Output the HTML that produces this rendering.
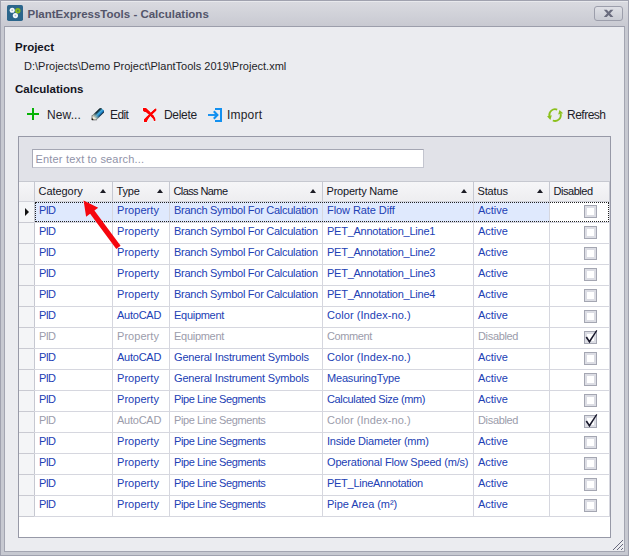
<!DOCTYPE html><html><head><meta charset="utf-8"><title>PlantExpressTools - Calculations</title><style>
*{box-sizing:border-box;margin:0;padding:0}
html,body{width:629px;height:556px;overflow:hidden;background:#c7c9d1;}
body{font-family:"Liberation Sans",sans-serif;font-size:11px;color:#1e1e28;position:relative;}
.abs{position:absolute}
#frame{position:absolute;left:0;top:0;width:629px;height:556px;background:#c7c9d1;border:1px solid #a0a2af;}
#title{position:absolute;left:1px;top:1px;width:627px;height:26px;background:linear-gradient(#d9dae0,#c8c9d1);border-top:1px solid #e8e9ed;}
#ttext{position:absolute;left:27.5px;top:7px;font-weight:bold;font-size:11.5px;line-height:15px;color:#53556a;white-space:pre}
#close{position:absolute;left:594px;top:6px;width:29px;height:15px;border:1px solid #9c9eab;border-radius:3px;background:linear-gradient(#dfe0e6,#c9cbd3);}
#content{position:absolute;left:4px;top:26px;width:621px;height:526px;background:#ebecf0;border:1px solid #a3a5b1;border-top-color:#9c9eab;}
.lbl{position:absolute;font-weight:bold;font-size:11.5px;line-height:14px;color:#14141e;white-space:pre}
.txt{position:absolute;font-size:11px;line-height:14px;white-space:pre;color:#1e1e28}
.tb{position:absolute;top:108px;font-size:12px;line-height:14px;white-space:pre;color:#1e1e28;letter-spacing:-0.1px}
#grid{position:absolute;left:18px;top:136px;width:593px;height:402px;background:#fff;border:1px solid #9799a7;}
#find{position:absolute;left:19px;top:137px;width:591px;height:44px;background:#e1e2e8;}
#search{position:absolute;left:32px;top:149px;width:392px;height:19px;background:#fff;border:1px solid #c3c5cf;border-top-color:#a4a6b3;border-left-color:#a9abb8;}
#search span{position:absolute;left:2.5px;top:2px;line-height:14px;color:#9092a8;font-size:11px;letter-spacing:0.18px;white-space:pre}
#hdr{position:absolute;left:19px;top:181px;width:591px;height:21px;background:linear-gradient(#f6f6f8,#ededf0);border-top:1px solid #c6c8d0;border-bottom:1px solid #d2d3da;border-right:1px solid #c6c8d1;}
.hc{position:absolute;top:182px;height:19px;border-left:1px solid #c6c8d1;font-size:11px;line-height:19px;padding-left:3.5px;white-space:pre;color:#14141e}
.tri{position:absolute;top:6.7px;width:0;height:0;border-left:3.7px solid transparent;border-right:3.7px solid transparent;border-bottom:4.3px solid #1c1c24;}
.row{position:absolute;left:19px;width:591px;height:21px;border-bottom:1px solid #d6d7df;border-right:1px solid #d6d7df;}
.ind{position:absolute;left:0;top:0;width:15px;height:21px;background:#f4f5f7;border-bottom:1px solid #c9cad2;}
.c.f{border-left-color:#c6c8d1}
.c{position:absolute;top:0;height:20px;border-left:1px solid #d6d7df;font-size:11px;line-height:17px;padding-left:4px;white-space:pre;color:#2140b4;overflow:hidden}
.dis .c{color:#9b9cab}
.cb{position:absolute;left:565px;top:3px;width:13px;height:13px;border:1px solid #a4a6b2;background:#fff;box-shadow:inset 0 0 0 2px #dcdde4;}
.sel .c{background:#dfe9fd}
.sel .c.k{background:#fff}
</style></head><body>
<div id="frame"></div>
<div id="title"></div>
<svg class="abs" style="left:7px;top:5px" width="16" height="16" viewBox="0 0 16 16"><rect x="0" y="0" width="16" height="16" rx="1.7" fill="#2b668c"/><circle cx="5.2" cy="5.2" r="2.55" fill="#f4f8fa"/><circle cx="5.2" cy="5.2" r="0.9" fill="#a9c0cf"/><circle cx="10.8" cy="5.7" r="1.8" fill="none" stroke="#86b81e" stroke-width="1.8"/><rect x="10.2" y="5.1" width="1.2" height="1.2" fill="#5a9a3a"/><circle cx="8.4" cy="10.6" r="2.6" fill="#f4f8fa"/><circle cx="8.4" cy="10.6" r="0.9" fill="#a9c0cf"/></svg>
<div id="ttext">PlantExpressTools - Calculations</div>
<div id="close"><svg class="abs" style="left:8px;top:1px" width="12" height="10" viewBox="0 0 12 10"><path d="M0.8 1.8 L3.8 1.8 L10.4 9 L7.4 9 Z M7.4 1.8 L10.4 1.8 L3.8 9 L0.8 9 Z" fill="#6a6c7e"/></svg></div>
<div id="content"></div>
<div class="lbl" style="left:15px;top:40px">Project</div>
<div class="txt" style="left:24px;top:59px">D:\Projects\Demo Project\PlantTools 2019\Project.xml</div>
<div class="lbl" style="left:15px;top:82px">Calculations</div>
<svg class="abs" style="left:26px;top:107px" width="14" height="14" viewBox="0 0 14 14"><path d="M7 1 V13 M1 7 H13" stroke="#06b206" stroke-width="2" fill="none"/></svg>
<div class="tb" style="left:47px;letter-spacing:0.1px">New...</div>
<svg class="abs" style="left:90px;top:106px" width="16" height="16" viewBox="90 106 16 16"><defs><linearGradient id="pg" gradientUnits="userSpaceOnUse" x1="95.6" y1="111.4" x2="100.6" y2="116.4"><stop offset="0" stop-color="#0b0f14"/><stop offset="0.24" stop-color="#143642"/><stop offset="0.5" stop-color="#45abdd"/><stop offset="0.72" stop-color="#1b7cc0"/><stop offset="0.9" stop-color="#0f2a40"/><stop offset="1" stop-color="#0a0d12"/></linearGradient><linearGradient id="pt" gradientUnits="userSpaceOnUse" x1="93.0" y1="119.0" x2="98.0" y2="114.0"><stop offset="0" stop-color="#f1ead6"/><stop offset="0.45" stop-color="#b9c2b0" stop-opacity="0.85"/><stop offset="1" stop-color="#5a8a98" stop-opacity="0"/></linearGradient></defs><path d="M92.2 115.4 L99.6 108.3 L101.2 108.0 L104.0 110.6 L104.0 112.4 L96.8 119.6 Z" fill="url(#pg)"/><path d="M92.3 115.6 L96.0 112.0 L100.4 116.4 L96.8 119.6 Z" fill="url(#pt)"/><path d="M92.3 115.4 L96.8 119.6 L92.0 119.9 Z" fill="#f1ead6"/><path d="M92.1 115.3 L91.9 120.0 L97.0 119.8" stroke="#1a1a1a" stroke-width="0.7" fill="none" stroke-opacity="0.75"/><path d="M91.9 117.7 L93.7 120.0 L91.8 120.1 Z" fill="#19140c"/></svg>
<div class="tb" style="left:110px;letter-spacing:-0.6px">Edit</div>
<svg class="abs" style="left:141px;top:106px" width="17" height="17" viewBox="141 106 17 17"><g fill="#ff0000" stroke="#eef8f9" stroke-width="1.4" stroke-linejoin="round" paint-order="stroke"><path d="M143.0 108.0 L145.8 108.0 L150.6 112.6 L153.6 115.8 L155.2 118.8 L155.2 121.0 L154.0 121.0 L153.6 119.0 L150.2 115.8 L146.4 112.2 L144.0 111.4 L143.0 110.4 Z"/><path d="M156.2 108.8 L156.2 110.4 L153.0 113.6 L149.8 116.4 L147.6 119.6 L146.6 122.0 L144.0 122.0 L144.0 119.4 L147.0 116.6 L150.6 113.0 L153.2 110.6 L155.2 108.8 Z"/></g><g fill="#ff0000"><path d="M143.0 108.0 L145.8 108.0 L150.6 112.6 L153.6 115.8 L155.2 118.8 L155.2 121.0 L154.0 121.0 L153.6 119.0 L150.2 115.8 L146.4 112.2 L144.0 111.4 L143.0 110.4 Z"/><path d="M156.2 108.8 L156.2 110.4 L153.0 113.6 L149.8 116.4 L147.6 119.6 L146.6 122.0 L144.0 122.0 L144.0 119.4 L147.0 116.6 L150.6 113.0 L153.2 110.6 L155.2 108.8 Z"/></g></svg>
<div class="tb" style="left:164px;letter-spacing:-0.3px">Delete</div>
<svg class="abs" style="left:207px;top:107px" width="16" height="16" viewBox="207 107 16 16"><path d="M215 109 H221 V121 H215" stroke="#1290f0" stroke-width="2" fill="none"/><path d="M208 115 H217.5" stroke="#1290f0" stroke-width="1.9" fill="none"/><path d="M213.8 111.2 L217.4 115 L213.8 118.8" stroke="#1290f0" stroke-width="2.1" fill="none"/></svg>
<div class="tb" style="left:227px;letter-spacing:0.2px">Import</div>
<svg class="abs" style="left:545px;top:106px" width="20" height="17" viewBox="545 106 20 17"><path d="M557.2 109.6 A5.8 5.8 0 0 0 549.4 116.2" stroke="#8bc01c" stroke-width="1.8" fill="none"/><path d="M552.8 120.5 A5.8 5.8 0 0 0 560.7 114.0" stroke="#8bc01c" stroke-width="1.8" fill="none"/><path d="M547.0 116.3 L551.8 115.3 L550.4 119.9 Z" fill="#8bc01c"/><path d="M558.2 114.5 L563.2 113.3 L559.4 109.9 Z" fill="#8bc01c"/></svg>
<div class="tb" style="left:567px;letter-spacing:-0.5px">Refresh</div>
<div id="grid"></div>
<div id="find"></div><div id="search"><span>Enter text to search...</span></div>
<div id="hdr"></div>
<div class="hc" style="left:34px;width:78px;letter-spacing:-0.05px">Category<span class="tri" style="left:64.8px"></span></div>
<div class="hc" style="left:112px;width:57px;letter-spacing:-0.2px">Type<span class="tri" style="left:43.8px"></span></div>
<div class="hc" style="left:169px;width:153px;letter-spacing:-0.6px">Class Name<span class="tri" style="left:139.8px"></span></div>
<div class="hc" style="left:322px;width:151px;letter-spacing:-0.2px">Property Name<span class="tri" style="left:137.8px"></span></div>
<div class="hc" style="left:473px;width:76px;letter-spacing:-0.15px">Status<span class="tri" style="left:62.8px"></span></div>
<div class="hc" style="left:549px;width:60px;letter-spacing:-0.45px">Disabled</div>
<div class="row sel" style="top:202px">
<div class="ind"><svg class="abs" style="left:6px;top:6px" width="4" height="8" viewBox="0 0 4 8"><path d="M0 0 L4 4 L0 8 Z" fill="#111"/></svg></div>
<div class="c f" style="left:15px;width:78px;letter-spacing:-0.7px">PID</div>
<div class="c" style="left:93px;width:57px;letter-spacing:0.05px">Property</div>
<div class="c" style="left:150px;width:153px;letter-spacing:-0.27px">Branch Symbol For Calculation</div>
<div class="c" style="left:303px;width:151px;letter-spacing:-0.08px">Flow Rate Diff</div>
<div class="c" style="left:454px;width:76px;letter-spacing:-0.02px">Active</div>
<div class="c k" style="left:530px;width:60px"></div><div class="cb"></div>
</div>
<div class="row" style="top:223px">
<div class="ind"></div>
<div class="c f" style="left:15px;width:78px;letter-spacing:-0.7px">PID</div>
<div class="c" style="left:93px;width:57px;letter-spacing:0.05px">Property</div>
<div class="c" style="left:150px;width:153px;letter-spacing:-0.27px">Branch Symbol For Calculation</div>
<div class="c" style="left:303px;width:151px;letter-spacing:-0.25px">PET_Annotation_Line1</div>
<div class="c" style="left:454px;width:76px;letter-spacing:-0.02px">Active</div>
<div class="c k" style="left:530px;width:60px"></div><div class="cb"></div>
</div>
<div class="row" style="top:244px">
<div class="ind"></div>
<div class="c f" style="left:15px;width:78px;letter-spacing:-0.7px">PID</div>
<div class="c" style="left:93px;width:57px;letter-spacing:0.05px">Property</div>
<div class="c" style="left:150px;width:153px;letter-spacing:-0.27px">Branch Symbol For Calculation</div>
<div class="c" style="left:303px;width:151px;letter-spacing:-0.25px">PET_Annotation_Line2</div>
<div class="c" style="left:454px;width:76px;letter-spacing:-0.02px">Active</div>
<div class="c k" style="left:530px;width:60px"></div><div class="cb"></div>
</div>
<div class="row" style="top:265px">
<div class="ind"></div>
<div class="c f" style="left:15px;width:78px;letter-spacing:-0.7px">PID</div>
<div class="c" style="left:93px;width:57px;letter-spacing:0.05px">Property</div>
<div class="c" style="left:150px;width:153px;letter-spacing:-0.27px">Branch Symbol For Calculation</div>
<div class="c" style="left:303px;width:151px;letter-spacing:-0.25px">PET_Annotation_Line3</div>
<div class="c" style="left:454px;width:76px;letter-spacing:-0.02px">Active</div>
<div class="c k" style="left:530px;width:60px"></div><div class="cb"></div>
</div>
<div class="row" style="top:286px">
<div class="ind"></div>
<div class="c f" style="left:15px;width:78px;letter-spacing:-0.7px">PID</div>
<div class="c" style="left:93px;width:57px;letter-spacing:0.05px">Property</div>
<div class="c" style="left:150px;width:153px;letter-spacing:-0.27px">Branch Symbol For Calculation</div>
<div class="c" style="left:303px;width:151px;letter-spacing:-0.25px">PET_Annotation_Line4</div>
<div class="c" style="left:454px;width:76px;letter-spacing:-0.02px">Active</div>
<div class="c k" style="left:530px;width:60px"></div><div class="cb"></div>
</div>
<div class="row" style="top:307px">
<div class="ind"></div>
<div class="c f" style="left:15px;width:78px;letter-spacing:-0.7px">PID</div>
<div class="c" style="left:93px;width:57px;letter-spacing:-0.25px">AutoCAD</div>
<div class="c" style="left:150px;width:153px;letter-spacing:-0.28px">Equipment</div>
<div class="c" style="left:303px;width:151px;letter-spacing:0.07px">Color (Index-no.)</div>
<div class="c" style="left:454px;width:76px;letter-spacing:-0.02px">Active</div>
<div class="c k" style="left:530px;width:60px"></div><div class="cb"></div>
</div>
<div class="row dis" style="top:328px">
<div class="ind"></div>
<div class="c f" style="left:15px;width:78px;letter-spacing:-0.7px">PID</div>
<div class="c" style="left:93px;width:57px;letter-spacing:0.05px">Property</div>
<div class="c" style="left:150px;width:153px;letter-spacing:-0.28px">Equipment</div>
<div class="c" style="left:303px;width:151px;letter-spacing:-0.4px">Comment</div>
<div class="c" style="left:454px;width:76px;letter-spacing:-0.33px">Disabled</div>
<div class="c k" style="left:530px;width:60px"></div><div class="cb"><svg class="abs" style="left:0px;top:-1px;overflow:visible" width="14" height="14" viewBox="0 0 14 14"><path d="M0.6 6.6 L2.0 5.6 L4.4 9.2 L11.3 -0.9 L12.3 -0.2 L4.5 12.2 Z" fill="#17172a"/></svg></div>
</div>
<div class="row" style="top:349px">
<div class="ind"></div>
<div class="c f" style="left:15px;width:78px;letter-spacing:-0.7px">PID</div>
<div class="c" style="left:93px;width:57px;letter-spacing:-0.25px">AutoCAD</div>
<div class="c" style="left:150px;width:153px;letter-spacing:-0.18px">General Instrument Symbols</div>
<div class="c" style="left:303px;width:151px;letter-spacing:0.07px">Color (Index-no.)</div>
<div class="c" style="left:454px;width:76px;letter-spacing:-0.02px">Active</div>
<div class="c k" style="left:530px;width:60px"></div><div class="cb"></div>
</div>
<div class="row" style="top:370px">
<div class="ind"></div>
<div class="c f" style="left:15px;width:78px;letter-spacing:-0.7px">PID</div>
<div class="c" style="left:93px;width:57px;letter-spacing:0.05px">Property</div>
<div class="c" style="left:150px;width:153px;letter-spacing:-0.18px">General Instrument Symbols</div>
<div class="c" style="left:303px;width:151px;letter-spacing:-0.18px">MeasuringType</div>
<div class="c" style="left:454px;width:76px;letter-spacing:-0.02px">Active</div>
<div class="c k" style="left:530px;width:60px"></div><div class="cb"></div>
</div>
<div class="row" style="top:391px">
<div class="ind"></div>
<div class="c f" style="left:15px;width:78px;letter-spacing:-0.7px">PID</div>
<div class="c" style="left:93px;width:57px;letter-spacing:0.05px">Property</div>
<div class="c" style="left:150px;width:153px;letter-spacing:-0.39px">Pipe Line Segments</div>
<div class="c" style="left:303px;width:151px;letter-spacing:-0.35px">Calculated Size (mm)</div>
<div class="c" style="left:454px;width:76px;letter-spacing:-0.02px">Active</div>
<div class="c k" style="left:530px;width:60px"></div><div class="cb"></div>
</div>
<div class="row dis" style="top:412px">
<div class="ind"></div>
<div class="c f" style="left:15px;width:78px;letter-spacing:-0.7px">PID</div>
<div class="c" style="left:93px;width:57px;letter-spacing:-0.25px">AutoCAD</div>
<div class="c" style="left:150px;width:153px;letter-spacing:-0.39px">Pipe Line Segments</div>
<div class="c" style="left:303px;width:151px;letter-spacing:0.07px">Color (Index-no.)</div>
<div class="c" style="left:454px;width:76px;letter-spacing:-0.33px">Disabled</div>
<div class="c k" style="left:530px;width:60px"></div><div class="cb"><svg class="abs" style="left:0px;top:-1px;overflow:visible" width="14" height="14" viewBox="0 0 14 14"><path d="M0.6 6.6 L2.0 5.6 L4.4 9.2 L11.3 -0.9 L12.3 -0.2 L4.5 12.2 Z" fill="#17172a"/></svg></div>
</div>
<div class="row" style="top:433px">
<div class="ind"></div>
<div class="c f" style="left:15px;width:78px;letter-spacing:-0.7px">PID</div>
<div class="c" style="left:93px;width:57px;letter-spacing:0.05px">Property</div>
<div class="c" style="left:150px;width:153px;letter-spacing:-0.39px">Pipe Line Segments</div>
<div class="c" style="left:303px;width:151px;letter-spacing:-0.2px">Inside Diameter (mm)</div>
<div class="c" style="left:454px;width:76px;letter-spacing:-0.02px">Active</div>
<div class="c k" style="left:530px;width:60px"></div><div class="cb"></div>
</div>
<div class="row" style="top:454px">
<div class="ind"></div>
<div class="c f" style="left:15px;width:78px;letter-spacing:-0.7px">PID</div>
<div class="c" style="left:93px;width:57px;letter-spacing:0.05px">Property</div>
<div class="c" style="left:150px;width:153px;letter-spacing:-0.39px">Pipe Line Segments</div>
<div class="c" style="left:303px;width:151px;letter-spacing:-0.17px">Operational Flow Speed (m/s)</div>
<div class="c" style="left:454px;width:76px;letter-spacing:-0.02px">Active</div>
<div class="c k" style="left:530px;width:60px"></div><div class="cb"></div>
</div>
<div class="row" style="top:475px">
<div class="ind"></div>
<div class="c f" style="left:15px;width:78px;letter-spacing:-0.7px">PID</div>
<div class="c" style="left:93px;width:57px;letter-spacing:0.05px">Property</div>
<div class="c" style="left:150px;width:153px;letter-spacing:-0.39px">Pipe Line Segments</div>
<div class="c" style="left:303px;width:151px;letter-spacing:-0.28px">PET_LineAnnotation</div>
<div class="c" style="left:454px;width:76px;letter-spacing:-0.02px">Active</div>
<div class="c k" style="left:530px;width:60px"></div><div class="cb"></div>
</div>
<div class="row" style="top:496px">
<div class="ind"></div>
<div class="c f" style="left:15px;width:78px;letter-spacing:-0.7px">PID</div>
<div class="c" style="left:93px;width:57px;letter-spacing:0.05px">Property</div>
<div class="c" style="left:150px;width:153px;letter-spacing:-0.39px">Pipe Line Segments</div>
<div class="c" style="left:303px;width:151px;letter-spacing:-0.05px">Pipe Area (m²)</div>
<div class="c" style="left:454px;width:76px;letter-spacing:-0.02px">Active</div>
<div class="c k" style="left:530px;width:60px"></div><div class="cb"></div>
</div>
<div class="abs" style="left:35px;top:202px;width:574px;height:20px;border:1px dotted #222;"></div>
<svg class="abs" style="left:70px;top:190px" width="60" height="65" viewBox="70 190 60 65"><path d="M83.6 200.6 L98.2 207.8 L94.4 210.6 L120.6 245.7 L116.3 249.0 L90.1 213.8 L86.1 216.7 Z" fill="#f5060e"/></svg>
<svg class="abs" style="left:610px;top:538px" width="14" height="13" viewBox="610 538 14 13" shape-rendering="crispEdges"><rect x="613" y="549" width="1" height="1" fill="#66687c"/><rect x="614" y="548" width="1" height="1" fill="#66687c"/><rect x="615" y="547" width="1" height="1" fill="#66687c"/><rect x="616" y="546" width="1" height="1" fill="#66687c"/><rect x="617" y="545" width="1" height="1" fill="#66687c"/><rect x="618" y="544" width="1" height="1" fill="#66687c"/><rect x="619" y="543" width="1" height="1" fill="#66687c"/><rect x="620" y="542" width="1" height="1" fill="#66687c"/><rect x="621" y="541" width="1" height="1" fill="#66687c"/><rect x="622" y="540" width="1" height="1" fill="#66687c"/><rect x="617" y="549" width="1" height="1" fill="#66687c"/><rect x="618" y="548" width="1" height="1" fill="#66687c"/><rect x="619" y="547" width="1" height="1" fill="#66687c"/><rect x="620" y="546" width="1" height="1" fill="#66687c"/><rect x="621" y="545" width="1" height="1" fill="#66687c"/><rect x="622" y="544" width="1" height="1" fill="#66687c"/><rect x="621" y="549" width="1" height="1" fill="#66687c"/><rect x="622" y="548" width="1" height="1" fill="#66687c"/></svg>
</body></html>
